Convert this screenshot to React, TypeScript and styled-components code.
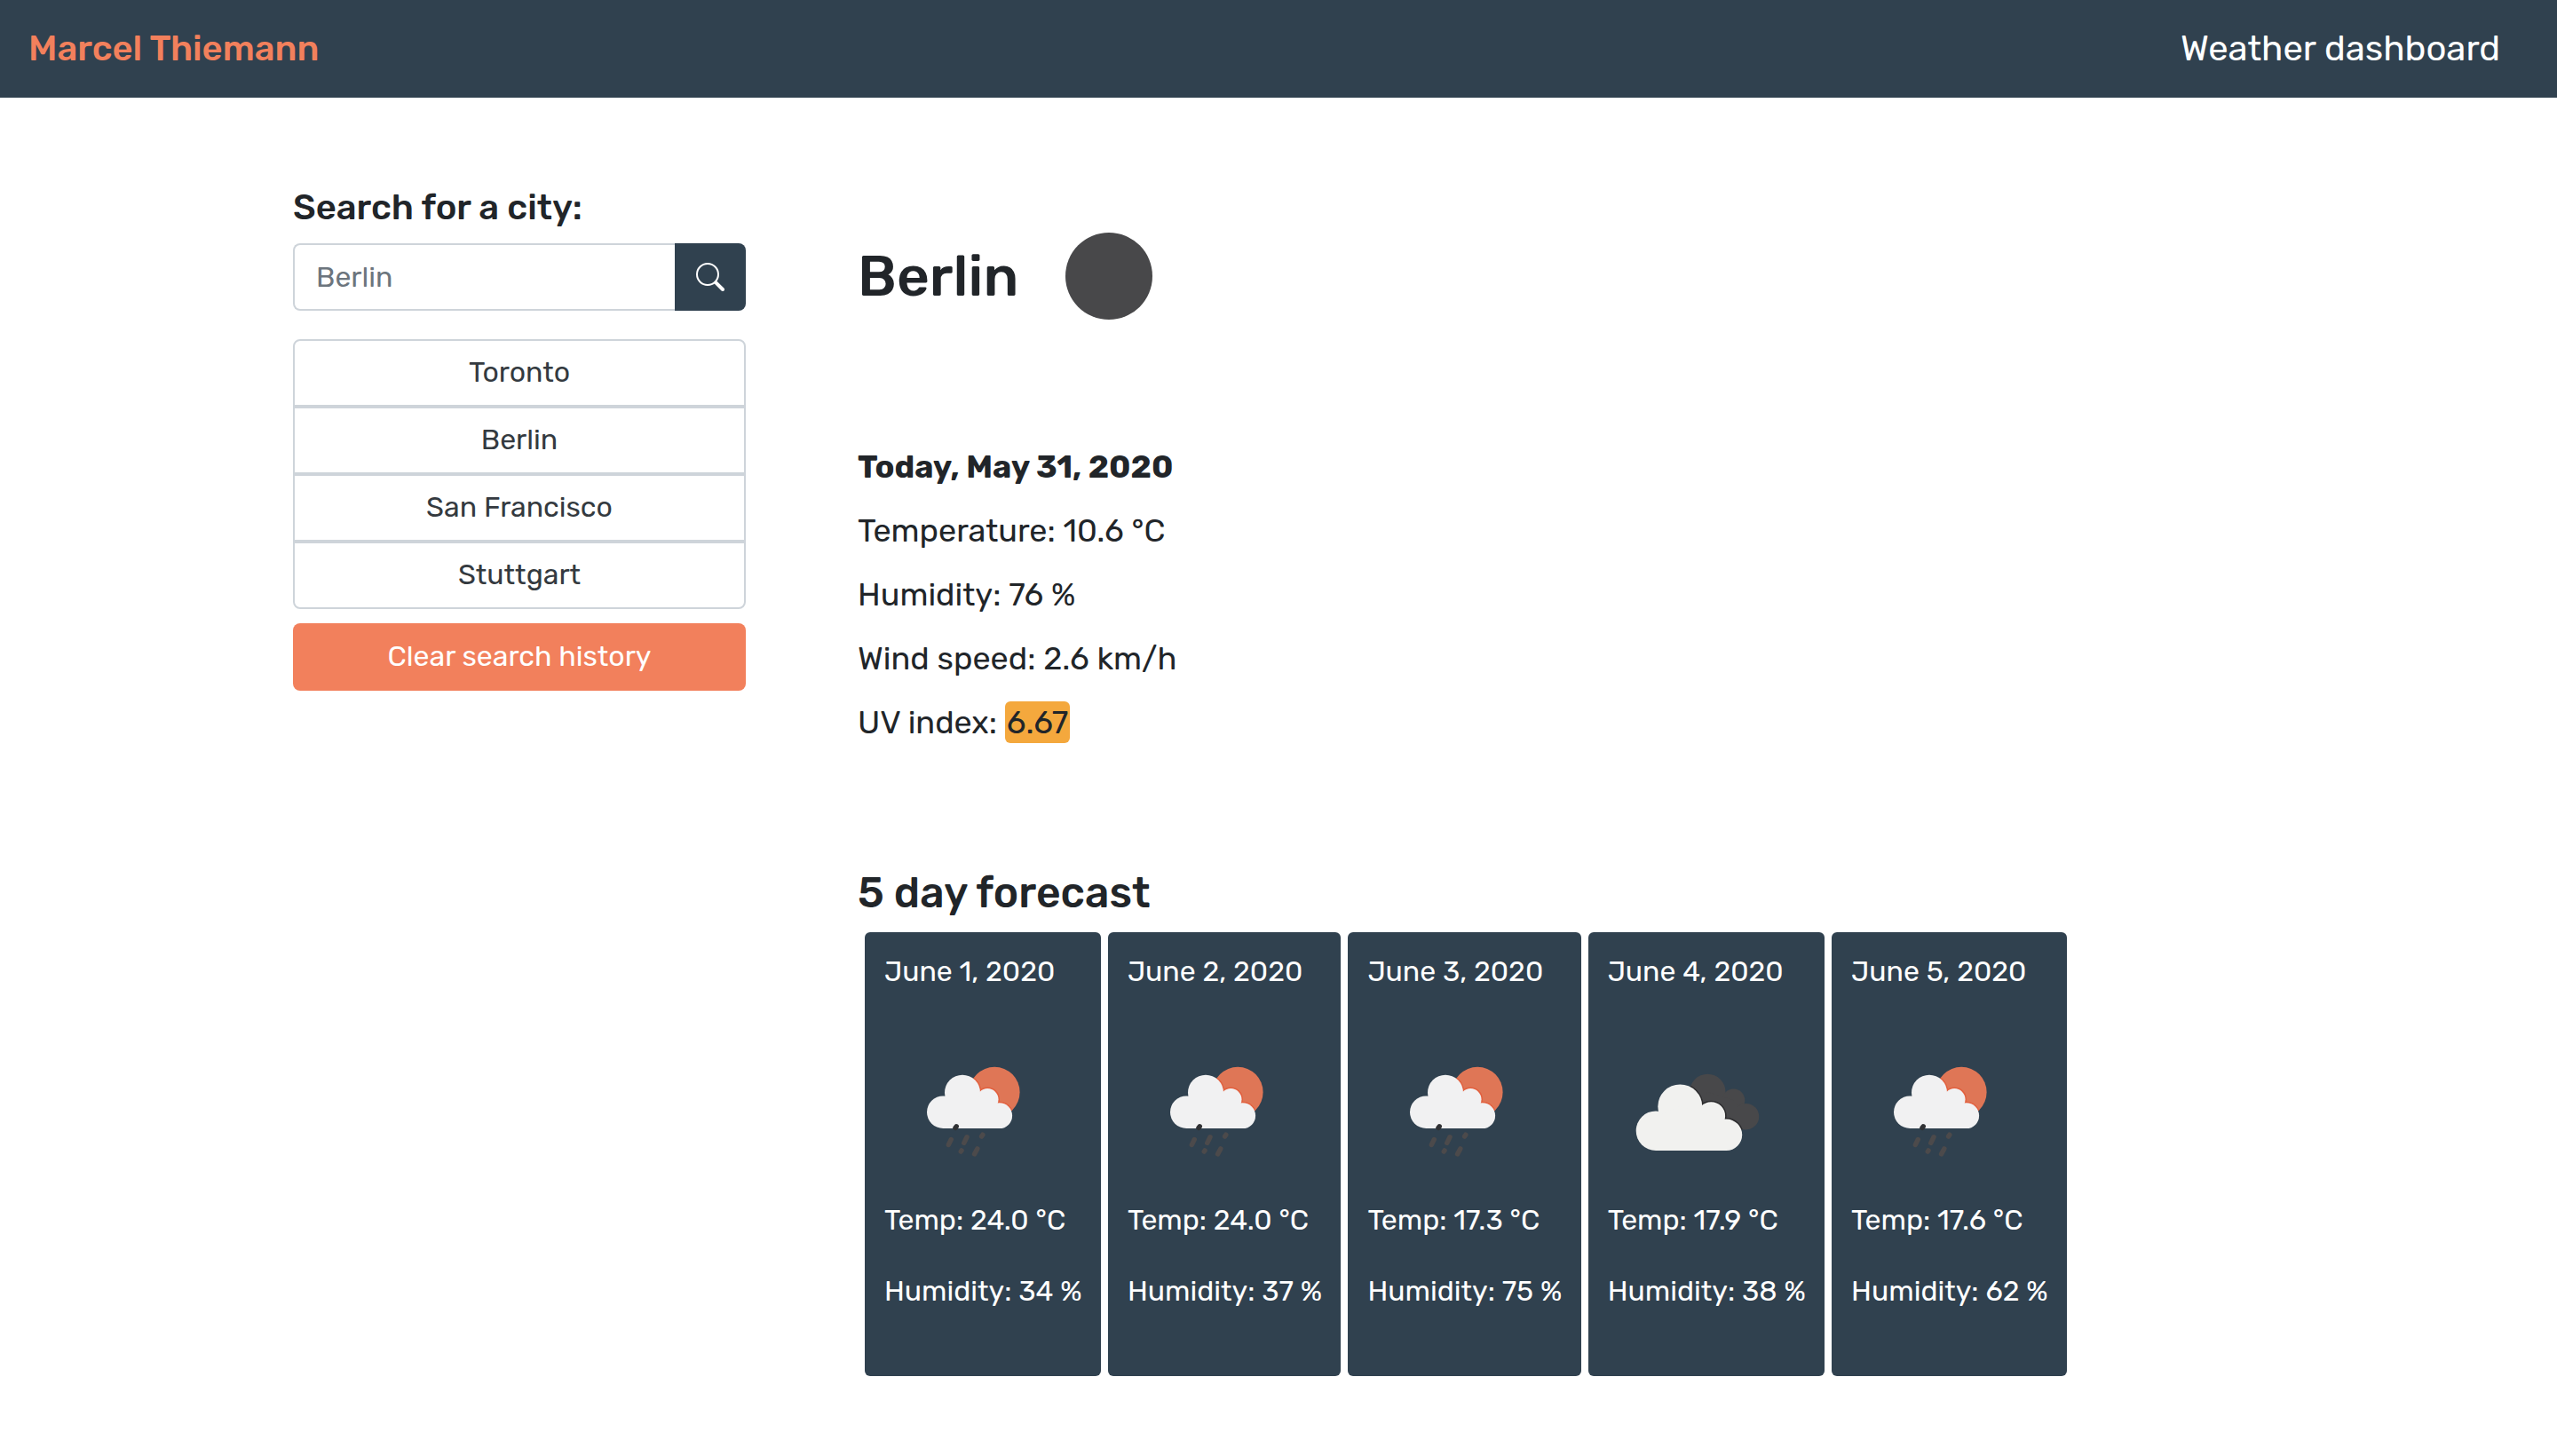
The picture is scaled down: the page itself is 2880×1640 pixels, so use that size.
import React, { useId } from 'react';
import styled, { createGlobalStyle } from 'styled-components';

const navy = '#30414f';
const coral = '#f2805c';
const ink = '#212529';
const line = '#ced4da';

const GlobalStyle = createGlobalStyle`
  *, *::before, *::after { box-sizing: border-box; }
  body {
    margin: 0;
    background: #fff;
    color: ${ink};
    font-family: Rubik, Roboto, sans-serif;
    font-size: 32px;
    line-height: 48px;
  }
  button, input { font: inherit; }
`;

const Navbar = styled.header`
  display: flex;
  align-items: center;
  justify-content: space-between;
  padding: 25px 64px 25px 32px;
  background: ${navy};
  font-size: 40px;
  line-height: 60px;
`;

const Brand = styled.a`
  color: ${coral};
  font-weight: 500;
  text-decoration: none;
`;

const NavTitle = styled.span`
  color: #fff;
`;

const Container = styled.main`
  display: flex;
  max-width: 2280px;
  margin: 0 auto;
  padding: 100px 30px 80px;
`;

const Sidebar = styled.aside`
  flex: 0 0 510px;
`;

const SearchForm = styled.form`
  display: flex;
  flex-wrap: wrap;
`;

const SearchLabel = styled.label`
  flex: 0 0 100%;
  margin-bottom: 16px;
  font-size: 40px;
  font-weight: 500;
`;

const SearchInput = styled.input`
  flex: 1;
  min-width: 0;
  padding: 12px 24px;
  border: 2px solid ${line};
  border-right: 0;
  border-radius: 8px 0 0 8px;
  background: #fff;
  color: #495057;

  &::placeholder {
    color: #6c757d;
    opacity: 1;
  }
`;

const SearchButton = styled.button`
  display: flex;
  align-items: center;
  justify-content: center;
  width: 80px;
  padding: 0;
  border: 0;
  border-radius: 0 8px 8px 0;
  background: ${navy};
  color: #fff;
`;

const History = styled.div`
  display: flex;
  flex-direction: column;
  margin: 32px 0 16px;
`;

const HistoryButton = styled.button`
  padding: 11px 24px 13px;
  border: 2px solid ${line};
  background: #fff;
  color: #343a40;

  &:first-child { border-radius: 8px 8px 0 0; }
  &:last-child { border-radius: 0 0 8px 8px; }
`;

const ClearButton = styled.button`
  width: 100%;
  padding: 13px 24px 15px;
  border: 0;
  border-radius: 8px;
  background: ${coral};
  color: #fff;
`;

const Content = styled.section`
  flex: 1;
  padding-left: 126px;
`;

const CityRow = styled.div`
  display: flex;
  align-items: center;
  gap: 2px;
`;

const CityName = styled.h1`
  margin: 0;
  padding-top: 2px;
  font-size: 64px;
  font-weight: 500;
  line-height: 76px;
`;

const Today = styled.section`
  padding: 80px 0 128px;
  font-size: 36px;
  line-height: 72px;
`;

const TodayTitle = styled.h2`
  margin: 0;
  font-size: 36px;
  font-weight: 700;
`;

const Reading = styled.p`
  margin: 0;
`;

const UvBadge = styled.span`
  padding: 2px;
  border-radius: 6px;
  background: #f4a83d;
`;

const ForecastTitle = styled.h2`
  margin: 0 0 16px;
  font-size: 48px;
  font-weight: 500;
  line-height: 56px;
`;

const ForecastRow = styled.div`
  display: flex;
  gap: 8px;
  max-width: 1362px;
  padding-left: 8px;
`;

const Card = styled.article`
  min-width: 0;
  padding: 20px 22px 40px;
  border-radius: 6px;
  background: ${navy};
  color: #fff;
  white-space: nowrap;
`;

const CardDate = styled.h3`
  margin: 0 0 32px;
  font-size: 32px;
  font-weight: 400;
`;

const CardText = styled.p`
  margin: 0 0 32px;
`;

const WeatherIcon = styled.svg`
  display: block;
  width: 200px;
  height: 200px;
`;

function SearchIcon() {
  return (
    <svg width="32" height="32" viewBox="0 0 16 16" fill="currentColor" aria-hidden="true">
      <path fillRule="evenodd" d="M10.442 10.442a1 1 0 0 1 1.415 0l3.85 3.85a1 1 0 0 1-1.414 1.415l-3.85-3.85a1 1 0 0 1 0-1.415z" />
      <path fillRule="evenodd" d="M6.5 12a5.5 5.5 0 1 0 0-11 5.5 5.5 0 0 0 0 11zM13 6.5a6.5 6.5 0 1 1-13 0 6.5 6.5 0 0 1 13 0z" />
    </svg>
  );
}

function ClearNightIcon() {
  return (
    <WeatherIcon viewBox="0 0 200 200" role="img" aria-label="Clear sky">
      <circle cx="100" cy="101" r="49" fill="#48484a" />
    </WeatherIcon>
  );
}

function RainCloud() {
  return (
    <>
      <circle cx="66.3" cy="102.7" r="18.3" />
      <circle cx="88" cy="80.7" r="20" />
      <circle cx="116.3" cy="88.3" r="12.2" />
      <circle cx="129.7" cy="106.7" r="14.4" />
      <path d="M66 121V90L88 80.7 116 88 130 106.7V121Z" />
    </>
  );
}

function SunRainIcon() {
  const clip = useId();
  return (
    <WeatherIcon viewBox="0 0 200 200" role="img" aria-label="Rain">
      <clipPath id={clip}>
        <circle cx="124.2" cy="80.2" r="28.4" />
      </clipPath>
      <circle cx="124.2" cy="80.2" r="28.4" fill="#df7656" />
      <g clipPath={`url(#${clip})`} stroke="#e2603e" strokeWidth="3">
        <RainCloud />
      </g>
      <g fill="#f1f1f2">
        <RainCloud />
      </g>
      <path d="M80 120.4L81.2 118.8" stroke="#303134" strokeWidth="5.5" strokeLinecap="round" />
      <g stroke="#4c4a4b" strokeWidth="5.5" strokeLinecap="round">
        <path d="M72.4 139.4L75.2 133.6M89.8 137.4L93 130.8M109.6 130L110.8 128.2M86.3 147L87 146M101.6 149.8L104.8 144" />
      </g>
    </WeatherIcon>
  );
}

function FrontCloud() {
  return (
    <>
      <circle cx="54" cy="123.7" r="22.3" />
      <circle cx="81.3" cy="96.4" r="25" />
      <circle cx="116.3" cy="107" r="15.8" />
      <circle cx="133.5" cy="128.3" r="17.7" />
      <path d="M54 146V108L81 96 116 107 133.5 128V146Z" />
    </>
  );
}

function BackCloud() {
  return (
    <>
      <circle cx="112.3" cy="80" r="20.2" />
      <circle cx="141.5" cy="89.3" r="12.7" />
      <circle cx="155.5" cy="107.7" r="14.7" />
      <path d="M112 80L141 89 155.5 107V122.3H100Z" />
    </>
  );
}

function BrokenCloudsIcon() {
  const clip = useId();
  return (
    <WeatherIcon viewBox="0 0 200 200" role="img" aria-label="Broken clouds">
      <clipPath id={clip}>
        <BackCloud />
      </clipPath>
      <g fill="#48484a">
        <BackCloud />
      </g>
      <g clipPath={`url(#${clip})`} stroke="#2b2b2d" strokeWidth="3">
        <FrontCloud />
      </g>
      <g fill="#f1f1ef">
        <FrontCloud />
      </g>
    </WeatherIcon>
  );
}

const cities = ['Toronto', 'Berlin', 'San Francisco', 'Stuttgart'];

const forecast = [
  { date: 'June 1, 2020', temp: '24.0', humidity: 34, Icon: SunRainIcon },
  { date: 'June 2, 2020', temp: '24.0', humidity: 37, Icon: SunRainIcon },
  { date: 'June 3, 2020', temp: '17.3', humidity: 75, Icon: SunRainIcon },
  { date: 'June 4, 2020', temp: '17.9', humidity: 38, Icon: BrokenCloudsIcon },
  { date: 'June 5, 2020', temp: '17.6', humidity: 62, Icon: SunRainIcon },
];

export default function App() {
  return (
    <>
      <GlobalStyle />
      <Navbar>
        <Brand href="#">Marcel Thiemann</Brand>
        <NavTitle>Weather dashboard</NavTitle>
      </Navbar>
      <Container>
        <Sidebar>
          <SearchForm onSubmit={(e) => e.preventDefault()}>
            <SearchLabel htmlFor="city">Search for a city:</SearchLabel>
            <SearchInput id="city" type="text" placeholder="Berlin" />
            <SearchButton type="submit" aria-label="Search">
              <SearchIcon />
            </SearchButton>
          </SearchForm>
          <History>
            {cities.map((city) => (
              <HistoryButton key={city} type="button">{city}</HistoryButton>
            ))}
          </History>
          <ClearButton type="button">Clear search history</ClearButton>
        </Sidebar>
        <Content>
          <CityRow>
            <CityName>Berlin</CityName>
            <ClearNightIcon />
          </CityRow>
          <Today>
            <TodayTitle>Today, May 31, 2020</TodayTitle>
            <Reading>Temperature: 10.6 °C</Reading>
            <Reading>Humidity: 76 %</Reading>
            <Reading>Wind speed: 2.6 km/h</Reading>
            <Reading>UV index: <UvBadge>6.67</UvBadge></Reading>
          </Today>
          <ForecastTitle>5 day forecast</ForecastTitle>
          <ForecastRow>
            {forecast.map(({ date, temp, humidity, Icon }) => (
              <Card key={date}>
                <CardDate>{date}</CardDate>
                <Icon />
                <CardText>Temp: {temp} °C</CardText>
                <CardText>Humidity: {humidity} %</CardText>
              </Card>
            ))}
          </ForecastRow>
        </Content>
      </Container>
    </>
  );
}
